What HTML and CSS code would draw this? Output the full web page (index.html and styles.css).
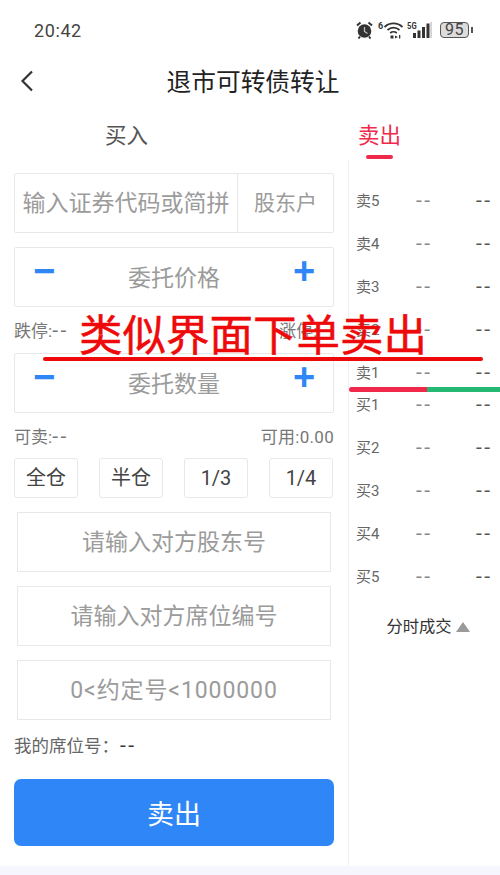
FILE: index.html
```html
<!DOCTYPE html>
<html lang="zh-CN">
<head>
  <meta charset="UTF-8" />
  <meta name="viewport" content="width=device-width, initial-scale=1.0"/>
  <title>退市可转债转让</title>
  <link rel="stylesheet" href="styles.css">
</head>
<body>
  <div class="screen">
    <div class="status-bar">
      <span class="clock">20:42</span>
      <div class="status-icons">
        <svg class="ic-alarm" width="17" height="18" viewBox="0 0 17 18">
          <circle cx="8.500" cy="10" r="6.800" fill="#333"/>
          <path d="M8.500 6V10.500L11.500 12.500" fill="none" stroke="#bbb" stroke-width="1.300"/>
          <path d="M1 4.500L4.500 1.500M16 4.500L12.500 1.500M4 15.500L2.500 17.500M13 15.500L14.500 17.500" fill="none" stroke="#333" stroke-width="2"/>
        </svg>
        <span class="tiny six">6</span>
        <svg class="ic-wifi" width="19" height="18" viewBox="0 0 19 18">
          <path d="M0.500 6C5.500 1.200 13.500 1.200 18.500 6M3.500 9C7 5.800 12 5.800 15.500 9M6.200 12C8 10.500 11 10.500 12.800 12" fill="none" stroke="#333" stroke-width="1.800"/>
          <path d="M6.500 14.500h3v3h-3zM11 14.500l3 1.500-3 1.500zM15 14h1.300v3.500h-1.300z" fill="#333"/>
        </svg>
        <span class="tiny five-g">5G</span>
        <svg class="ic-signal" width="19" height="18" viewBox="0 0 19 18">
          <rect x="0" y="12" width="3" height="5" fill="#333"/>
          <rect x="4.500" y="9.500" width="3" height="7.500" fill="#333"/>
          <rect x="9" y="6" width="3" height="11" fill="#333"/>
          <rect x="13.500" y="2.500" width="3" height="14.500" fill="#333"/>
          <rect x="17.300" y="1" width="1.500" height="16" fill="#c9c9c9"/>
        </svg>
        <span class="battery"><span class="battery-num">95</span></span>
        <span class="battery-cap"></span>
      </div>
    </div>

    <header class="nav">
      <svg class="back" width="14" height="22" viewBox="0 0 14 22">
        <path d="M12 1.500L2.500 11L12 20.500" fill="none" stroke="#333" stroke-width="2.200"/>
      </svg>
      <h1>退市可转债转让</h1>
    </header>

    <div class="tabs">
      <div class="tab">买入</div>
      <div class="tab active">卖出</div>
    </div>

    <div class="main">
      <div class="sell-form">
        <div class="code-row">
          <div class="code-input">输入证券代码或简拼</div>
          <div class="holder">股东户</div>
        </div>

        <div class="stepper">
          <span class="step">−</span>
          <span class="step-label">委托价格</span>
          <span class="step">+</span>
        </div>
        <div class="info-row limit-row">
          <span>跌停:<span class="dash">--</span></span>
          <span>涨停:<span class="dash">--</span></span>
        </div>
        <div class="stepper">
          <span class="step">−</span>
          <span class="step-label">委托数量</span>
          <span class="step">+</span>
        </div>
        <div class="info-row avail-row">
          <span>可卖:<span class="dash">--</span></span>
          <span class="avail-num">可用:0.00</span>
        </div>

        <div class="pos-row">
          <div class="pos-btn">全仓</div>
          <div class="pos-btn">半仓</div>
          <div class="pos-btn">1/3</div>
          <div class="pos-btn">1/4</div>
        </div>

        <div class="field">请输入对方股东号</div>
        <div class="field">请输入对方席位编号</div>
        <div class="field field-num">0&lt;约定号&lt;1000000</div>

        <div class="seat-row">我的席位号：<span class="dash seat-val">--</span></div>
        <button class="submit" type="button">卖出</button>
      </div>

      <div class="quotes">
        <div class="quote-row"><span class="q-name">卖5</span><span class="q-val">--</span><span class="q-val">--</span></div>
        <div class="quote-row"><span class="q-name">卖4</span><span class="q-val">--</span><span class="q-val">--</span></div>
        <div class="quote-row"><span class="q-name">卖3</span><span class="q-val">--</span><span class="q-val">--</span></div>
        <div class="quote-row"><span class="q-name">卖2</span><span class="q-val">--</span><span class="q-val">--</span></div>
        <div class="quote-row"><span class="q-name">卖1</span><span class="q-val">--</span><span class="q-val">--</span></div>
        <div class="ratio-bar"><span class="ratio-sell"></span><span class="ratio-buy"></span></div>
        <div class="quote-row buy-first"><span class="q-name">买1</span><span class="q-val">--</span><span class="q-val">--</span></div>
        <div class="quote-row"><span class="q-name">买2</span><span class="q-val">--</span><span class="q-val">--</span></div>
        <div class="quote-row"><span class="q-name">买3</span><span class="q-val">--</span><span class="q-val">--</span></div>
        <div class="quote-row"><span class="q-name">买4</span><span class="q-val">--</span><span class="q-val">--</span></div>
        <div class="quote-row"><span class="q-name">买5</span><span class="q-val">--</span><span class="q-val">--</span></div>
        <div class="ticks">分时成交<span class="arrow-up"></span></div>
      </div>
    </div>

    <div class="bottom-strip"></div>

    <!-- 标注，盖在页面上 -->
    <div class="note">类似界面下单卖出</div>
    <div class="note-line"></div>
  </div>
</body>
</html>
```

FILE: styles.css
```css
:root {
  --blue: #2f86f6;
  --red: #f0294a;
  --green: #25b872;
  --line: #e8e8e8;
  --hint: #9b9b9b;
  --text: #333333;
}

* {
  box-sizing: border-box;
}

html, body {
  margin: 0;
  height: 100%;
}

body {
  font-family: Roboto, "Noto Sans CJK SC", sans-serif;
  background-color: #ffffff;
  color: var(--text);
}

.screen {
  position: relative;
  width: 500px;
  height: 875px;
  overflow: hidden;
  display: flex;
  flex-direction: column;
}

/* 状态栏 */
.status-bar {
  height: 60px;
  flex: none;
  display: flex;
  align-items: center;
  justify-content: space-between;
  padding: 0 27px 0 34px;
}

.clock {
  font-size: 18px;
  letter-spacing: 0.6px;
  color: #444;
}

.status-icons {
  display: flex;
  align-items: center;
}

.tiny {
  font-size: 9px;
  font-weight: 700;
  line-height: 9px;
  align-self: flex-start;
  margin-top: 1px;
  color: #333;
}

.six {
  width: 6px;
  margin-left: 5px;
}

.five-g {
  width: 10px;
  margin-left: 4px;
  white-space: nowrap;
  transform: scaleX(0.85);
  transform-origin: left;
}

.ic-signal {
  margin-left: -4px;
}

.battery {
  width: 29px;
  height: 16px;
  margin-left: 8px;
  border: 1.5px solid #555;
  border-radius: 4px;
  background-color: #dcdcdc;
  display: flex;
  align-items: center;
  justify-content: center;
}

.battery-num {
  font-size: 16px;
  line-height: 14px;
  letter-spacing: 0.5px;
  color: #444;
}

.battery-cap {
  width: 2px;
  height: 6px;
  margin-left: 2px;
  background-color: #555;
}

/* 标题 */
.nav {
  height: 45px;
  flex: none;
  position: relative;
  display: flex;
  align-items: center;
  justify-content: center;
  padding: 0 0 5px 6px;
}

.nav h1 {
  margin: 0;
  font-size: 24.700px;
  font-weight: 400;
  color: #222;
}

.back {
  position: absolute;
  left: 20px;
  top: 10px;
}

.tabs {
  height: 55px;
  flex: none;
  display: flex;
  padding-top: 11px;
}

.tab {
  width: 253px;
  flex: none;
  text-align: center;
  font-size: 21.500px;
  line-height: 40px;
  color: #555;
}

.tab.active {
  position: relative;
  color: var(--red);
}

.tab.active::after {
  content: "";
  position: absolute;
  left: 113px;
  top: 39px;
  width: 27px;
  height: 4px;
  border-radius: 2px;
  background-color: var(--red);
}

.main {
  flex: 1;
  display: flex;
  min-height: 0;
}

/* 左侧表单 */
.sell-form {
  width: 349px;
  flex: none;
  padding: 13px 14px 0;
  border-right: 1px solid #f1f1f1;
}

.code-row {
  height: 60px;
  display: flex;
  border: 1px solid var(--line);
  border-radius: 2px;
}

.code-input {
  width: 223px;
  border-right: 1px solid var(--line);
  font-size: 23px;
  line-height: 59px;
  text-align: center;
  color: var(--hint);
  white-space: nowrap;
}

.holder {
  flex: 1;
  font-size: 21px;
  line-height: 59px;
  text-align: center;
  color: var(--hint);
}

.stepper {
  height: 60px;
  display: flex;
  justify-content: space-between;
  padding: 0 17px;
  border: 1px solid var(--line);
  border-radius: 2px;
}

.code-row + .stepper {
  margin-top: 14px;
}

.step {
  width: 24px;
  font-family: "Liberation Sans", sans-serif;
  font-size: 38px;
  font-weight: 700;
  line-height: 46px;
  text-align: center;
  color: var(--blue);
}

.step-label {
  font-size: 23px;
  line-height: 62px;
  color: var(--hint);
}

.info-row {
  display: flex;
  justify-content: space-between;
  font-size: 17px;
  color: #777;
}

.limit-row {
  height: 46px;
  line-height: 49px;
}

.avail-row {
  height: 45px;
  line-height: 48px;
}

.avail-num {
  letter-spacing: 0.3px;
}

.dash {
  font-size: 21px;
  line-height: 1;
  letter-spacing: 2.500px;
}

.pos-row {
  display: flex;
  gap: 21px;
}

.pos-btn {
  width: 64px;
  height: 40px;
  border: 1px solid var(--line);
  border-radius: 3px;
  font-size: 20px;
  line-height: 38px;
  text-align: center;
  color: #444;
}

.field {
  width: 314px;
  height: 60px;
  margin: 14px 0 0 3px;
  border: 1px solid var(--line);
  font-size: 23px;
  line-height: 60px;
  text-align: center;
  color: var(--hint);
}

.field-num {
  letter-spacing: 0.9px;
}

.seat-row {
  height: 59px;
  font-size: 17.500px;
  line-height: 53px;
  color: #666;
}

.seat-val {
  margin-left: 1px;
  color: #333;
}

.submit {
  display: block;
  width: 320px;
  height: 67px;
  padding: 0;
  border: none;
  border-radius: 7px;
  background-color: var(--blue);
  color: #ffffff;
  font-family: inherit;
  font-size: 27px;
}

/* 右侧五档 */
.quotes {
  flex: 1;
  min-width: 0;
  padding-top: 18px;
}

.quote-row {
  height: 43px;
  display: flex;
  align-items: center;
  padding-left: 7px;
  font-size: 15px;
  color: #666;
}

.q-name, .q-val {
  width: 60px;
  flex: none;
}

.q-val {
  font-size: 21px;
  letter-spacing: 2.500px;
  color: #888;
}

.q-val + .q-val {
  color: #555;
}

.ratio-bar {
  height: 5px;
  margin-top: -6px;
  display: flex;
}

.ratio-sell {
  width: 78px;
  border-radius: 3px 0 0 3px;
  background-color: var(--red);
}

.ratio-buy {
  flex: 1;
  background-color: var(--green);
}

.buy-first {
  margin-top: -10px;
}

.ticks {
  margin-top: 15px;
  display: flex;
  align-items: center;
  justify-content: center;
  font-size: 16.300px;
  line-height: 30px;
  color: #333;
  padding-left: 7px;
}

.arrow-up {
  width: 0;
  height: 0;
  margin-left: 4px;
  border-left: 7.500px solid transparent;
  border-right: 7.500px solid transparent;
  border-bottom: 10px solid #9a9a9a;
}

.bottom-strip {
  height: 9px;
  flex: none;
  background-color: #f6f7fe;
}

/* 红色标注 */
.note {
  position: absolute;
  left: 79px;
  top: 307px;
  font-size: 43.500px;
  font-weight: 400;
  -webkit-text-stroke: 0.5px #ee0a0a;
  line-height: 60px;
  color: #ee0a0a;
  white-space: nowrap;
}

.note-line {
  position: absolute;
  left: 43px;
  top: 357px;
  width: 440px;
  height: 4px;
  border-radius: 2px;
  background-color: #ee0a0a;
}
```
